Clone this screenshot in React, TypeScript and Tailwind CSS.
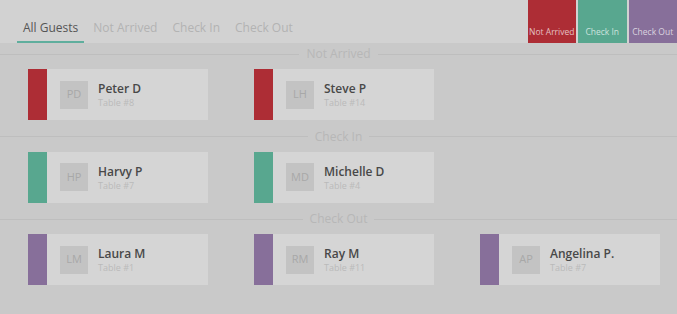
import React from "react";

type Guest = { initials: string; name: string; table: string };

const sections: { title: string; bar: string; guests: Guest[] }[] = [
  {
    title: "Not Arrived",
    bar: "bg-[#ad2d35]",
    guests: [
      { initials: "PD", name: "Peter D", table: "Table #8" },
      { initials: "LH", name: "Steve P", table: "Table #14" },
    ],
  },
  {
    title: "Check In",
    bar: "bg-[#58a78f]",
    guests: [
      { initials: "HP", name: "Harvy P", table: "Table #7" },
      { initials: "MD", name: "Michelle D", table: "Table #4" },
    ],
  },
  {
    title: "Check Out",
    bar: "bg-[#876f9a]",
    guests: [
      { initials: "LM", name: "Laura M", table: "Table #1" },
      { initials: "RM", name: "Ray M", table: "Table #11" },
      { initials: "AP", name: "Angelina P.", table: "Table #7" },
    ],
  },
];

const tabs = ["All Guests", "Not Arrived", "Check In", "Check Out"];

const legend = [
  { label: "Not Arrived", bg: "bg-[#ad2d35]" },
  { label: "Check In", bg: "bg-[#58a78f]" },
  { label: "Check Out", bg: "bg-[#876f9a]" },
];

const GuestCard = ({ guest, bar }: { guest: Guest; bar: string }) => (
  <div className="flex h-[51px] w-[180px] bg-[#d5d5d5]">
    <div className={`w-[19px] ${bar}`} />
    <div className="flex items-center pl-[13px]">
      <div className="flex h-[28px] w-[28px] items-center justify-center bg-[#c3c3c3] text-[11px] text-[#a8a8a8]">
        {guest.initials}
      </div>
      <div className="ml-[10px] flex flex-col">
        <span className="text-[12px] font-semibold leading-[17px] text-[#484848]">
          {guest.name}
        </span>
        <span className="text-[9px] leading-[12px] text-[#bababa]">
          {guest.table}
        </span>
      </div>
    </div>
  </div>
);

export default function App() {
  return (
    <div
      className="h-[314px] w-[677px] overflow-hidden bg-[#c9c9c9]"
      style={{ fontFamily: '"Open Sans", "Liberation Sans", sans-serif' }}
    >
      {/* header */}
      <div className="flex h-[43px] items-stretch justify-between bg-[#d2d2d2]">
        <div className="flex gap-[3px] pl-[17px]">
          {tabs.map((t, i) => (
            <div
              key={t}
              className={`flex h-full items-center border-b-2 px-[6px] pt-[15px] text-[12px] ${
                i === 0
                  ? "border-[#5fae9d] text-[#555555]"
                  : "border-transparent text-[#b3b3b3]"
              }`}
            >
              {t}
            </div>
          ))}
        </div>
        <div className="flex gap-[2px]">
          {legend.map((l) => (
            <div
              key={l.label}
              className={`flex w-[48.5px] items-end justify-center pb-[4px] text-[8.5px] text-white/70 ${l.bg}`}
            >
              {l.label}
            </div>
          ))}
        </div>
      </div>

      {/* sections */}
      {sections.map((s) => (
        <div key={s.title} className="pb-[5.5px]">
          <div className="flex h-[22px] items-center">
            <div className="h-px flex-1 bg-[#bebebe]" />
            <span className="px-[7px] text-[12px] text-[#b7b7b7]">{s.title}</span>
            <div className="h-px flex-1 bg-[#bebebe]" />
          </div>
          <div className="mt-[4px] flex gap-[46px] pl-[28px]">
            {s.guests.map((g) => (
              <GuestCard key={g.name} guest={g} bar={s.bar} />
            ))}
          </div>
        </div>
      ))}
    </div>
  );
}
